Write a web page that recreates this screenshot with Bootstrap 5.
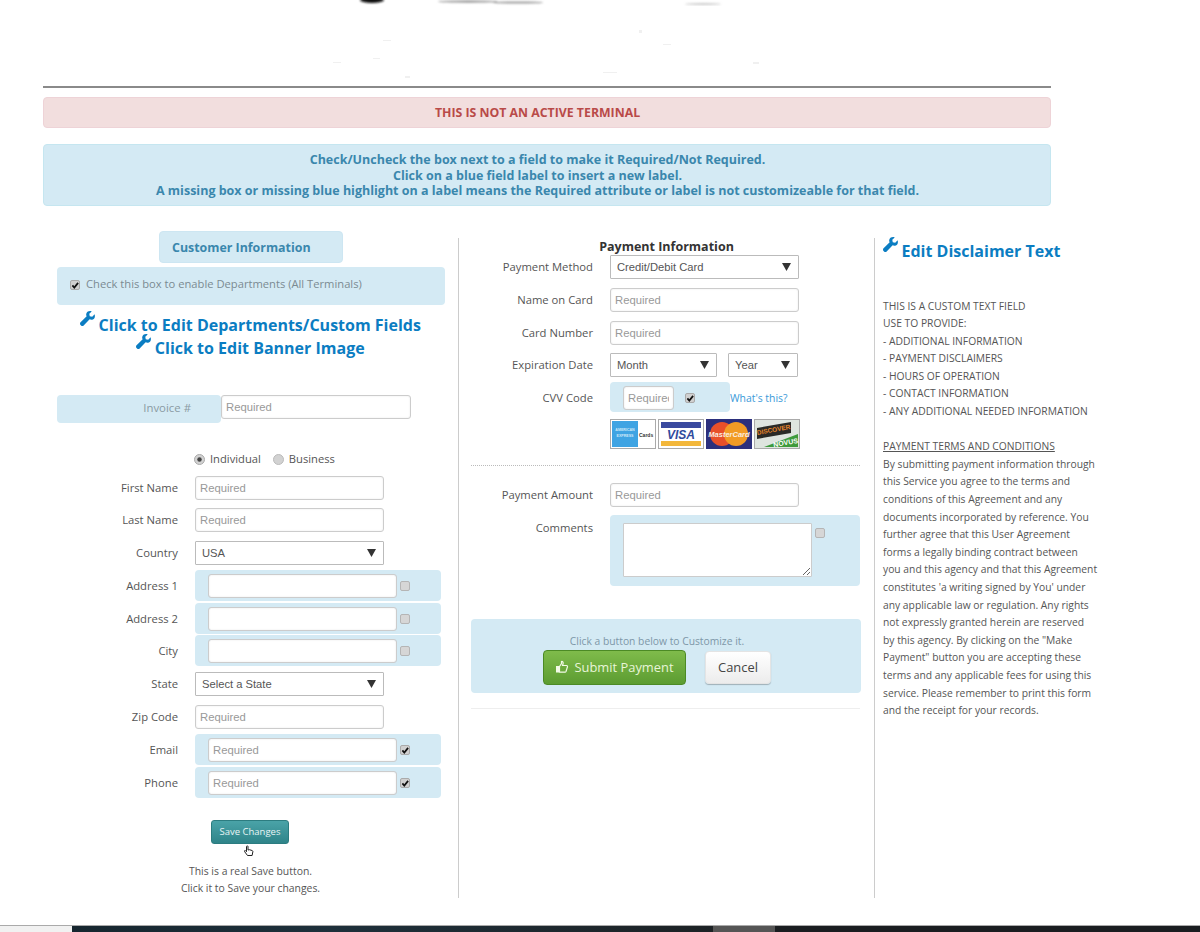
<!DOCTYPE html>
<html lang="en"><head><meta charset="utf-8"><title>Terminal customization</title>
<link rel="stylesheet" href="https://cdn.jsdelivr.net/npm/bootstrap@5.3.0/dist/css/bootstrap.min.css">
<style>
html,body{height:932px;overflow:hidden;background:#fff}
body{font-family:"Open Sans","Noto Sans",sans-serif;font-size:11.25px;color:#555}
.pg{padding-left:43px}
.banner{display:block;width:1008px;height:86px}
.toprule{height:2px;width:1008px;background:#8a8a8a;opacity:1;margin:0;border:0}
.msg{width:1008px;margin:0;border:1px solid;border-radius:4px;font-weight:700;font-size:12.5px;text-align:center;padding:0 19px 0 0}
.msg-bad{margin-top:9px;height:31px;line-height:29px;background:#f2dede;border-color:#eed3d7;color:#b94a48;font-size:12.3px}
.msg-info{margin-top:16px;height:62px;padding-top:7px;line-height:15.5px;background:#d4eaf4;border-color:#c5e6f0;color:#3a87ad}
.cols{margin-top:32px;display:grid;grid-template-columns:415px 416px 226px;height:660px}
.colm{position:relative}
.colb{border-left:1px solid #ccc}
.hl{background:#d4eaf4;border-radius:4px}
.custbox{margin:-7px 0 0 116px;width:184px;height:32px;line-height:32px;padding-left:12px;font-weight:700;font-size:12.4px;color:#3a87ad;border:1px solid #cde6f2}
.deptbox{margin:4px 0 0 14px;width:388px;height:38px;padding:0 13px 3px;color:#7b8a92;font-size:11.2px;gap:6px}
.editlinks{margin-top:8.5px;text-align:center;font-weight:700;font-size:16px;line-height:23px;color:#0b7dc2}
.editlinks>div{height:23px}
.wrench{width:15px;height:15px;vertical-align:baseline;margin-right:3.500px;transform:translateY(-5px)}
.invoice{margin:35px 0 0 14px}
.invlab{width:164px;height:28px;line-height:26px;text-align:right;padding-right:30px;color:#8a9aa3;font-size:11.4px}
.fld.form-control{height:24px;min-height:0;width:189px;padding:0 4px;border:1px solid #ccc;border-radius:3px;font:11.3px "Liberation Sans",Arial,sans-serif;color:#555;box-shadow:inset 0 0 2px rgba(0,0,0,.1)}
.inv-fld.form-control{width:190px}
.fld.form-control::placeholder{color:#999;opacity:1}
.fldsel.form-select{height:24px;width:189px;padding:0 6px;border:1px solid #bbb;border-radius:1px;font:11.2px "Liberation Sans",Arial,sans-serif;color:#555;background-size:9px 8px;background-position:right 7px center;background-image:url("data:image/svg+xml,%3Csvg xmlns='http://www.w3.org/2000/svg' viewBox='0 0 9 8'%3E%3Cpath d='M0 0h9L4.500 8z' fill='%23333'/%3E%3C/svg%3E")}
.month-sel.form-select{width:107px;margin-right:8px}
.year-sel.form-select{width:70px;margin-left:3px}
.radios{margin:28px 0 7px 151px;height:18px;gap:5px;font-size:11.2px}
.indiv{margin-right:7px}
.radios .form-check-input{margin:0;width:11px;height:11px;background-color:#d2d2d2;border:1px solid #bbb}
.radios .form-check-input:checked{background-color:#d2d2d2;border-color:#aaa;background-image:url("data:image/svg+xml,%3Csvg xmlns='http://www.w3.org/2000/svg' viewBox='-4 -4 8 8'%3E%3Ccircle r='2' fill='%23444'/%3E%3C/svg%3E")}
.frow{height:24px;margin-bottom:8.8px}
.frow>label,.comlab{width:135px;margin-right:17px;text-align:right;line-height:24px;flex:none}
.colb .frow>label,.colb .comlab{width:134px}
.hlrow{margin:-4px 0 -3px;padding:4px 0 3px 13px;width:246px;height:31px;flex:none;position:relative}
.tick.form-check-input{margin:0;flex:none;width:10px;height:10px;border:1px solid #b5b5b5;border-radius:2px;background-color:#d6d6d6}
.tick.form-check-input:checked{background-color:#d0d0d0;border-color:#aaa;background-size:9px;background-image:url("data:image/svg+xml,%3Csvg xmlns='http://www.w3.org/2000/svg' viewBox='0 0 10 10'%3E%3Cpath d='M2 5.200l2 2.300L8 2.500' fill='none' stroke='%23111' stroke-width='1.800'/%3E%3C/svg%3E")}
.hlrow .tick.form-check-input{margin-left:3px}
.savebtn.btn{display:block;margin:25px 0 0 168px;width:78px;height:24px;padding:0;font-size:9.5px;color:#e8f4f4;border:1px solid #2c7c80;border-radius:3px;background:linear-gradient(#4aa3a8,#2f8489)}
.handcur{display:block;margin:1px 0 0 200px;width:12px;height:13px}
.savenote{margin-top:5px;text-align:center;font-size:10.4px;line-height:17px;width:415px}
.payhead{height:17px;line-height:18px;text-align:center;font-weight:700;color:#333;font-size:12.5px}
.cvv{width:120px;height:30px;padding:4px 0 3px 13px;margin:-4px 0 -3px;flex:none}
.cvv .fld.form-control{width:51px}
.cvv .tick.form-check-input{margin-left:11px}
.whats{color:#3a9ad9;text-decoration:none;font-size:10.4px;line-height:24px;flex:none}
.cardrow{gap:2px;margin-left:151px;height:30px}
.cardrow svg{width:46px;height:30px;display:block}
.dots{margin:16px 0 17px 12px;width:389px;border-top:1px dotted #bbb}
.combox{width:250px;height:71px;padding:8px 0 0 13px;flex:none;margin-top:-1px}
.fldarea.form-control{width:189px;height:54px;min-height:0;padding:2px 4px;border:1px solid #ccc;border-radius:1px;resize:both;box-shadow:none}
.combox .tick.form-check-input{margin:5px 0 0 3px}
.comrow{height:71px;margin-bottom:32px}
.btnpanel{margin:0 0 0 12px;width:390px;height:74px;padding:14px 18px 0 0;text-align:center;color:#7d97a8;font-size:10.3px;line-height:17px}
.btnwrap{margin:0 0 0 72px;gap:19px}
.subbtn.btn{width:143px;height:35px;padding:0;font-size:12.9px;color:#e8f5d8;border:1px solid #4c8a25;border-radius:4px;background:linear-gradient(#7fbb4b,#5c9c31);gap:5px}
.canbtn.btn{width:66px;height:33px;margin-top:1px;padding:0;font-size:12.9px;color:#444;border:1px solid #e4e4e4;border-radius:4px;background:linear-gradient(#fff,#ececec);box-shadow:0 1px 1px rgba(0,0,0,.25)}
.endrule{margin:15px 0 0 12px;width:389px;border:0;border-top:1px solid #eee;opacity:1}
.discol{padding-left:8px}
.dishead{height:26px;line-height:26px;font-weight:700;font-size:16px;color:#0b7dc2;white-space:nowrap}
.distext{margin-top:33.500px;font-size:10.3px;line-height:17.6px;color:#555;white-space:nowrap}
.bar{margin-top:27px;height:7px;width:1200px}
.bar>div{border-top:1px solid #aaa}
.b1{width:72px;background:#f1f1f1}
.b2{width:641px;background:linear-gradient(90deg,#16262f,#1e303b 40%,#1d2225)}
.b3{width:62px;background:#555}
.b4{flex:1;background:#1a1d20}
</style></head>
<body>
<div class="pg">
  <svg class="banner" viewBox="0 0 1008 86" aria-hidden="true">
    <defs><filter id="bl"><feGaussianBlur stdDeviation=".8"/></filter></defs>
    <g filter="url(#bl)">
      <ellipse cx="329" cy="0" rx="12" ry="3" fill="#111"/>
      <ellipse cx="425" cy="1.500" rx="30" ry="1.200" fill="#999"/>
      <ellipse cx="475" cy="2.500" rx="25" ry="1" fill="#999"/>
      <ellipse cx="660" cy="4" rx="18" ry=".8" fill="#bbb"/>
    </g>
    <g fill="#f0f0f0"><rect x="290" y="62" width="8" height="1"/><rect x="330" y="58" width="7" height="1"/><rect x="362" y="76" width="5" height="2"/><rect x="340" y="40" width="8" height="1"/><rect x="596" y="30" width="3" height="3"/><rect x="560" y="72" width="14" height="1"/><rect x="710" y="62" width="6" height="2"/><rect x="620" y="44" width="8" height="1"/></g>
  </svg>
  <hr class="toprule">
  <div class="alert msg msg-bad" role="alert">THIS IS NOT AN ACTIVE TERMINAL</div>
  <div class="alert msg msg-info" role="alert">Check/Uncheck the box next to a field to make it Required/Not Required.<br>Click on a blue field label to insert a new label.<br>A missing box or missing blue highlight on a label means the Required attribute or label is not customizeable for that field.</div>

  <div class="cols">
    <div class="colm">
      <div class="hl custbox">Customer Information</div>
      <div class="hl deptbox d-flex align-items-center"><input class="form-check-input tick" type="checkbox" checked aria-label="Departments"><span>Check this box to enable Departments (All Terminals)</span></div>
      <div class="editlinks">
        <div><svg class="wrench" viewBox="0 0 16 16"><path fill="currentColor" d="M15.600 3.400 13 6l-2.600-.5L9.900 3l2.600-2.600C10.200-.4 7.700.4 6.900 2.300c-.5 1.200-.4 2.400.2 3.400L.6 12.100c-.8.800-.8 2 0 2.800l.5.500c.8.800 2 .8 2.800 0l6.400-6.500c1 .6 2.200.7 3.400.2 1.900-.8 2.700-3.300 1.900-5.700z"/></svg>Click to Edit Departments/Custom Fields</div>
        <div><svg class="wrench" viewBox="0 0 16 16"><path fill="currentColor" d="M15.600 3.400 13 6l-2.600-.5L9.900 3l2.600-2.600C10.200-.4 7.700.4 6.900 2.300c-.5 1.200-.4 2.400.2 3.400L.6 12.100c-.8.800-.8 2 0 2.800l.5.500c.8.800 2 .8 2.800 0l6.400-6.500c1 .6 2.200.7 3.400.2 1.900-.8 2.700-3.300 1.900-5.700z"/></svg>Click to Edit Banner Image</div>
      </div>
      <div class="invoice d-flex align-items-start"><div class="hl invlab">Invoice #</div><input class="form-control fld inv-fld" placeholder="Required" aria-label="Invoice"></div>
      <div class="radios d-flex align-items-center"><input class="form-check-input" type="radio" name="kind" checked aria-label="Individual"><span class="indiv">Individual</span><input class="form-check-input" type="radio" name="kind" aria-label="Business"><span>Business</span></div>
      <div class="frow d-flex"><label>First Name</label><input class="form-control fld" placeholder="Required"></div>
      <div class="frow d-flex"><label>Last Name</label><input class="form-control fld" placeholder="Required"></div>
      <div class="frow d-flex"><label>Country</label><select class="form-select fldsel"><option>USA</option></select></div>
      <div class="frow d-flex"><label>Address 1</label><div class="hl hlrow d-flex align-items-center"><input class="form-control fld"><input class="form-check-input tick" type="checkbox" aria-label="Required"></div></div>
      <div class="frow d-flex"><label>Address 2</label><div class="hl hlrow d-flex align-items-center"><input class="form-control fld"><input class="form-check-input tick" type="checkbox" aria-label="Required"></div></div>
      <div class="frow d-flex"><label>City</label><div class="hl hlrow d-flex align-items-center"><input class="form-control fld"><input class="form-check-input tick" type="checkbox" aria-label="Required"></div></div>
      <div class="frow d-flex"><label>State</label><select class="form-select fldsel"><option>Select a State</option></select></div>
      <div class="frow d-flex"><label>Zip Code</label><input class="form-control fld" placeholder="Required"></div>
      <div class="frow d-flex"><label>Email</label><div class="hl hlrow d-flex align-items-center"><input class="form-control fld" placeholder="Required"><input class="form-check-input tick" type="checkbox" checked aria-label="Required"></div></div>
      <div class="frow d-flex"><label>Phone</label><div class="hl hlrow d-flex align-items-center"><input class="form-control fld" placeholder="Required"><input class="form-check-input tick" type="checkbox" checked aria-label="Required"></div></div>
      <button type="button" class="btn savebtn">Save Changes</button>
      <svg class="handcur" viewBox="0 0 12 13" aria-hidden="true"><path d="M3.500 1.500c0-.8 1.500-.8 1.500 0v3.500l1.500-.3 2.500.8c.8.300 1 .8.800 1.500l-.7 3.500H4.500L1.500 6.500c-.4-.8.500-1.300 1-.8l1 1z" fill="#fff" stroke="#222" stroke-width="1"/></svg>
      <div class="savenote">This is a real Save button.<br>Click it to Save your changes.</div>
    </div>

    <div class="colm colb">
      <div class="payhead">Payment Information</div>
      <div class="frow d-flex"><label>Payment Method</label><select class="form-select fldsel"><option>Credit/Debit Card</option></select></div>
      <div class="frow d-flex"><label>Name on Card</label><input class="form-control fld" placeholder="Required"></div>
      <div class="frow d-flex"><label>Card Number</label><input class="form-control fld" placeholder="Required"></div>
      <div class="frow d-flex"><label>Expiration Date</label><select class="form-select fldsel month-sel"><option>Month</option></select><select class="form-select fldsel year-sel"><option>Year</option></select></div>
      <div class="frow d-flex"><label>CVV Code</label><div class="hl cvv d-flex align-items-center"><input class="form-control fld" placeholder="Required"><input class="form-check-input tick" type="checkbox" checked aria-label="Required"></div><a class="whats" href="#">What's this?</a></div>
      <div class="cardrow d-flex">
        <svg viewBox="0 0 46 30"><rect x=".5" y=".5" width="45" height="29" fill="#fff" stroke="#aaa"/><rect x="2" y="2" width="26" height="26" fill="#3fa4e3"/><text x="15" y="12" text-anchor="middle" font-family="Liberation Sans" font-size="3.600" font-weight="700" fill="#cfe8f8">AMERICAN</text><text x="15" y="18" text-anchor="middle" font-family="Liberation Sans" font-size="3.600" font-weight="700" fill="#cfe8f8">EXPRESS</text><text x="29" y="18" font-family="Liberation Sans" font-size="5" font-weight="700" fill="#333">Cards</text></svg>
        <svg viewBox="0 0 46 30"><rect x=".5" y=".5" width="45" height="29" fill="#fff" stroke="#aaa"/><rect x="3" y="3" width="40" height="6" fill="#3a4a9f"/><rect x="3" y="22" width="40" height="5" fill="#f3b73a"/><text x="23" y="20" text-anchor="middle" font-family="Liberation Sans" font-size="12" font-weight="700" font-style="italic" fill="#2f4a9c">VISA</text></svg>
        <svg viewBox="0 0 46 30"><rect width="46" height="30" fill="#2b2f7c"/><circle cx="16" cy="15" r="12" fill="#e8502a"/><circle cx="30" cy="15" r="12" fill="#f29b25"/><text x="23" y="18" text-anchor="middle" font-family="Liberation Sans" font-size="7.500" font-weight="700" font-style="italic" fill="#fbeee0">MasterCard</text></svg>
        <svg viewBox="0 0 46 30"><rect x=".5" y=".5" width="45" height="29" fill="#dfe5df" stroke="#aaa"/><path d="M3 9 37 3v11L3 20z" fill="#2a2a26"/><path d="M10 28 44 15v13z" fill="#3f9a3c"/><text x="20" y="13" text-anchor="middle" transform="rotate(-10 20 13)" font-family="Liberation Sans" font-size="6.500" font-weight="700" fill="#e8862a">DISCOVER</text><text x="32" y="26" text-anchor="middle" transform="rotate(-10 32 26)" font-family="Liberation Sans" font-size="7" font-weight="700" fill="#fff">NOVUS</text></svg>
      </div>
      <div class="dots"></div>
      <div class="frow d-flex"><label>Payment Amount</label><input class="form-control fld" placeholder="Required"></div>
      <div class="comrow d-flex"><span class="comlab">Comments</span><div class="hl combox d-flex align-items-start"><textarea class="form-control fld fldarea" aria-label="Comments"></textarea><input class="form-check-input tick" type="checkbox" aria-label="Required"></div></div>
      <div class="hl btnpanel">Click a button below to Customize it.
        <div class="btnwrap d-flex align-items-start">
          <button type="button" class="btn subbtn d-flex align-items-center justify-content-center"><svg width="14" height="14" viewBox="0 0 14 14" aria-hidden="true"><path d="M4.500 6.500 6.500 3.500V1.500c1.300-.2 2 .8 1.500 2.500L7.500 5.500h4c.8 0 1.200.8.900 1.500l-1.400 4.500c-.2.500-.6.700-1 .7H4.500z" fill="none" stroke="#f2fae6" stroke-width="1.200"/><rect x="1" y="6" width="3" height="6.500" fill="#f2fae6"/></svg>Submit Payment</button>
          <button type="button" class="btn canbtn">Cancel</button>
        </div>
      </div>
      <hr class="endrule">
    </div>

    <div class="colm colb discol">
      <div class="dishead"><svg class="wrench" viewBox="0 0 16 16"><path fill="currentColor" d="M15.600 3.400 13 6l-2.600-.5L9.900 3l2.600-2.600C10.200-.4 7.700.4 6.900 2.300c-.5 1.200-.4 2.400.2 3.400L.6 12.100c-.8.800-.8 2 0 2.800l.5.500c.8.800 2 .8 2.800 0l6.400-6.500c1 .6 2.200.7 3.400.2 1.900-.8 2.700-3.300 1.900-5.700z"/></svg>Edit Disclaimer Text</div>
      <div class="distext">THIS IS A CUSTOM TEXT FIELD<br>USE TO PROVIDE:<br>- ADDITIONAL INFORMATION<br>- PAYMENT DISCLAIMERS<br>- HOURS OF OPERATION<br>- CONTACT INFORMATION<br>- ANY ADDITIONAL NEEDED INFORMATION<br><br><u>PAYMENT TERMS AND CONDITIONS</u><br>By submitting payment information through<br>this Service you agree to the terms and<br>conditions of this Agreement and any<br>documents incorporated by reference. You<br>further agree that this User Agreement<br>forms a legally binding contract between<br>you and this agency and that this Agreement<br>constitutes 'a writing signed by You' under<br>any applicable law or regulation. Any rights<br>not expressly granted herein are reserved<br>by this agency. By clicking on the "Make<br>Payment" button you are accepting these<br>terms and any applicable fees for using this<br>service. Please remember to print this form<br>and the receipt for your records.</div>
    </div>
  </div>
</div>
<div class="bar d-flex"><div class="b1"></div><div class="b2"></div><div class="b3"></div><div class="b4"></div></div>
<script src="https://cdn.jsdelivr.net/npm/bootstrap@5.3.0/dist/js/bootstrap.bundle.min.js"></script>
</body></html>
